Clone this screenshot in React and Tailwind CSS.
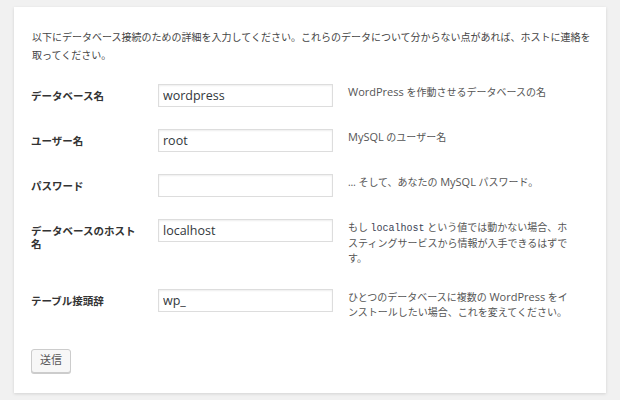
import React from "react";

const ui = { fontFamily: '"Open Sans", "Noto Sans CJK JP", sans-serif' };

const Latin = ({ children }) => (
  <span className="text-[11px] leading-[0]">{children}</span>
);

const rows = [
  {
    label: "データベース名",
    value: "wordpress",
    desc: (
      <>
        <Latin>WordPress</Latin> を作動させるデータベースの名
      </>
    ),
  },
  {
    label: "ユーザー名",
    value: "root",
    desc: (
      <>
        <Latin>MySQL</Latin> のユーザー名
      </>
    ),
  },
  {
    label: "パスワード",
    value: "",
    desc: (
      <>
        … そして、あなたの <Latin>MySQL</Latin> パスワード。
      </>
    ),
  },
  {
    label: "データベースのホスト名",
    value: "localhost",
    desc: (
      <>
        もし{" "}
        <code
          className="text-[10px] leading-[0] text-[#3a3f55]"
          style={{ fontFamily: '"Liberation Mono", monospace' }}
        >
          localhost
        </code>{" "}
        という値では動かない場合、ホスティングサービスから情報が入手できるはずです。
      </>
    ),
  },
  {
    label: "テーブル接頭辞",
    value: "wp_",
    desc: (
      <>
        ひとつのデータベースに複数の <Latin>WordPress</Latin> をインストールしたい場合、これを変えてください。
      </>
    ),
  },
];

const FormRow = ({ row }) => (
  <div className="flex items-start">
    <div className="w-[127px] shrink-0 pr-[20px] mt-[6px] text-[10.5px] leading-[13px] font-bold text-[#333]">
      {row.label}
    </div>
    <input
      type="text"
      defaultValue={row.value}
      className="w-[175px] h-[23px] shrink-0 border border-[#dddddd] bg-white pl-[4px] text-[12.5px] text-[#32373c] shadow-[inset_0_1px_2px_rgba(0,0,0,0.07)] outline-none"
    />
    <p className="ml-[15px] w-[225px] mt-[1px] text-[10px] leading-[15.5px] text-[#555]">
      {row.desc}
    </p>
  </div>
);

export default function App() {
  return (
    <div className="min-h-[400px] bg-[#f1f1f1] pt-[7px] pl-[14px]" style={ui}>
      <div className="w-[592px] bg-white pt-[21px] pl-[17px] pb-[20px] shadow-[0_1px_3px_rgba(0,0,0,0.13)]">
        <p className="w-[568px] pl-[1px] text-[10px] leading-[18px] text-[#444]">
          以下にデータベース接続のための詳細を入力してください。これらのデータについて分からない点があれば、ホストに連絡を取ってください。
        </p>
        <div className="mt-[20px] flex flex-col gap-[22px]">
          {rows.map((row) => (
            <FormRow key={row.label} row={row} />
          ))}
        </div>
        <button
          type="button"
          className="mt-[28px] w-[40px] h-[24px] rounded-[3px] border border-[#cccccc] bg-[#f7f7f7] text-[11px] text-[#555] shadow-[0_1px_0_#cccccc]"
        >
          送信
        </button>
      </div>
    </div>
  );
}
